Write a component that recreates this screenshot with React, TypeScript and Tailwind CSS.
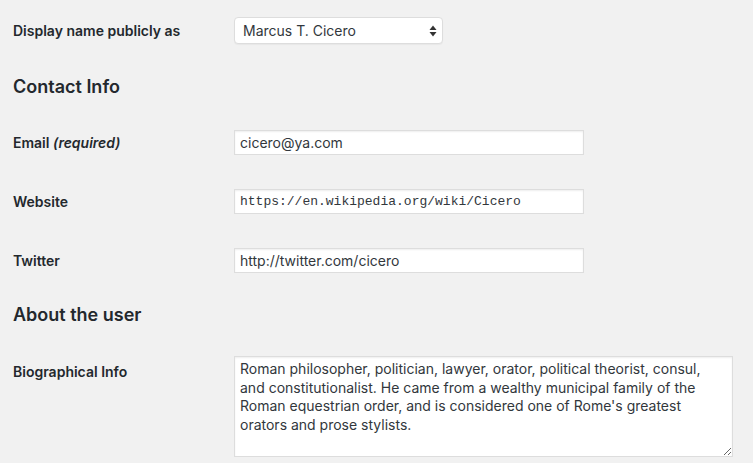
const sans = "font-['Inter','Liberation_Sans',sans-serif]";

function Label({ children }: { children: React.ReactNode }) {
  return (
    <div className="w-[221px] shrink-0 text-[14px] font-semibold text-[#23282d]">{children}</div>
  );
}

function TextField({ value, mono, className }: { value: string; mono?: boolean; className?: string }) {
  return (
    <input
      readOnly
      defaultValue={value}
      className={`h-[25px] w-[350px] border border-[#dddddd] bg-white px-[5px] text-[#32373c] shadow-[inset_0_1px_2px_rgba(0,0,0,0.07)] outline-none ${
        mono ? "font-['Liberation_Mono',monospace] text-[13px]" : "text-[14px]"
      } ${className ?? ""}`}
    />
  );
}

export default function App() {
  return (
    <main className={`min-h-screen bg-[#f1f1f1] pl-[13px] pt-[17px] text-[#23282d] ${sans}`}>
      <div className="flex items-center">
        <Label>Display name publicly as</Label>
        <div className="relative">
          <select
            defaultValue="Marcus T. Cicero"
            className="h-[27px] w-[209px] appearance-none rounded-[4px] border border-[#dddddd] bg-white pl-[8px] text-[14px] text-[#32373c] shadow-[0_1px_1px_rgba(0,0,0,0.04)] outline-none"
          >
            <option>Marcus T. Cicero</option>
          </select>
          <svg className="pointer-events-none absolute right-[6px] top-[8px]" width="8" height="12" viewBox="0 0 8 12">
            <path d="M4 0.5 L7.5 5 L0.5 5 Z" fill="#333" />
            <path d="M4 11.5 L7.5 7 L0.5 7 Z" fill="#333" />
          </svg>
        </div>
      </div>

      <h2 className="mt-[31px] h-[24px] text-[18px] font-semibold leading-[24px]">Contact Info</h2>

      <div className="mt-[31px] flex items-center">
        <Label>
          Email <span className="italic">(required)</span>
        </Label>
        <TextField value="cicero@ya.com" />
      </div>

      <div className="mt-[34px] flex items-center">
        <Label>Website</Label>
        <TextField value="https://en.wikipedia.org/wiki/Cicero" mono />
      </div>

      <div className="mt-[34px] flex items-center">
        <Label>Twitter</Label>
        <TextField value="http://twitter.com/cicero" />
      </div>

      <h2 className="mt-[30px] h-[24px] text-[18px] font-semibold leading-[24px]">About the user</h2>

      <div className="mt-[29px] flex items-start">
        <div className="pt-[5px]">
          <Label>Biographical Info</Label>
        </div>
        <textarea
          readOnly
          rows={5}
          defaultValue="Roman philosopher, politician, lawyer, orator, political theorist, consul, and constitutionalist. He came from a wealthy municipal family of the Roman equestrian order, and is considered one of Rome's greatest orators and prose stylists."
          className="h-[101px] w-[499px] resize border border-[#dddddd] bg-white pl-[5px] pr-[6px] pt-[3px] text-[14px] leading-[18.5px] text-[#32373c] shadow-[inset_0_1px_2px_rgba(0,0,0,0.07)] outline-none"
        />
      </div>
    </main>
  );
}
